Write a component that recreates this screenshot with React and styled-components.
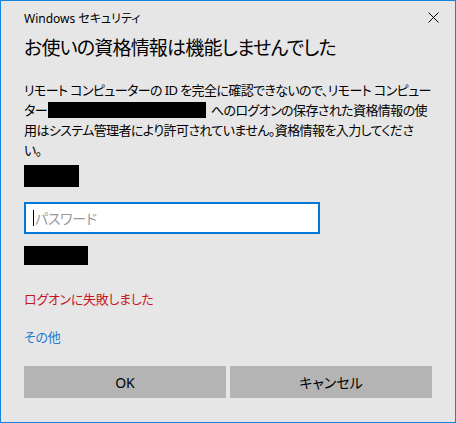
import React from 'react';
import styled, { createGlobalStyle } from 'styled-components';

const GlobalStyle = createGlobalStyle`
  html, body {
    margin: 0;
    padding: 0;
    background: #e6e6e6;
  }
  * {
    box-sizing: border-box;
  }
`;

const Window = styled.div`
  width: 456px;
  height: 423px;
  border: 1px solid #1883d7;
  background: #e6e6e6;
  font-family: "Noto Sans", "Noto Sans CJK JP", sans-serif;
  font-feature-settings: "palt";
  color: #000;
  display: flex;
  flex-direction: column;
  padding: 0 23px 0 23px;
  overflow: hidden;
`;

const TitleBar = styled.div`
  display: flex;
  justify-content: space-between;
  align-items: center;
  height: 31px;
  padding-top: 2px;
`;

const Caption = styled.div`
  font-size: 12px;
`;

const CloseButton = styled.button`
  border: none;
  background: transparent;
  padding: 0;
  margin-right: -8px;
  width: 14px;
  height: 14px;
  display: flex;
  align-items: center;
  justify-content: center;
`;

const Heading = styled.h1`
  margin: 2px 0 0;
  font-size: 19px;
  letter-spacing: -0.8px;
  font-weight: 400;
  line-height: 28px;
`;

const Message = styled.div`
  margin-top: 18px;
  font-size: 13px;
  letter-spacing: -0.6px;
  line-height: 20px;
`;

const Line = styled.div`
  white-space: pre;
  display: flex;
  align-items: center;
`;

const Redacted = styled.span`
  display: inline-block;
  background: #000;
  width: ${(p) => p.w}px;
  height: ${(p) => p.h}px;
  margin: ${(p) => p.m || '0'};
`;

const Block = styled.div`
  background: #000;
  width: ${(p) => p.w}px;
  height: ${(p) => p.h}px;
  margin-top: ${(p) => p.mt}px;
`;

const InputWrap = styled.div`
  margin-top: 15px;
  width: 296px;
  height: 32px;
  border: 2px solid #0078d7;
  background: #fff;
  display: flex;
  align-items: center;
  padding-left: 7px;
`;

const Caret = styled.span`
  width: 1px;
  height: 16px;
  background: #000;
  margin-right: 1px;
`;

const Placeholder = styled.span`
  font-size: 14px;
  letter-spacing: -0.3px;
  color: #9a9a9a;
`;

const ErrorText = styled.div`
  margin-top: 24px;
  font-size: 13px;
  letter-spacing: -0.3px;
  color: #c8171e;
`;

const MoreLink = styled.a`
  margin-top: 19px;
  font-size: 13px;
  letter-spacing: -0.3px;
  color: #1a7cd3;
  text-decoration: none;
  align-self: flex-start;
`;

const ButtonRow = styled.div`
  margin-top: 20px;
  display: grid;
  grid-template-columns: 1fr 1fr;
  gap: 4px;
`;

const Button = styled.button`
  height: 32px;
  border: none;
  background: #b4b4b4;
  font-family: inherit;
  font-feature-settings: "palt";
  font-size: 14px;
  color: #000;
`;

export default function App() {
  return (
    <>
      <GlobalStyle />
      <Window>
        <TitleBar>
          <Caption>Windows セキュリティ</Caption>
          <CloseButton aria-label="閉じる">
            <svg width="11" height="11" viewBox="0 0 11 11">
              <path d="M0.5 0.5 L10.5 10.5 M10.5 0.5 L0.5 10.5" stroke="#000" strokeWidth="1" />
            </svg>
          </CloseButton>
        </TitleBar>
        <Heading>お使いの資格情報は機能しませんでした</Heading>
        <Message>
          <Line>リモート コンピューターの ID を完全に確認できないので、リモート コンピュー</Line>
          <Line>
            ター<Redacted w={158} h={16} m="0 5px 0 1px" />へのログオンの保存された資格情報の使
          </Line>
          <Line>用はシステム管理者により許可されていません。資格情報を入力してくださ</Line>
          <Line>い。</Line>
        </Message>
        <Block w={55} h={22} mt={5} />
        <InputWrap>
          <Caret />
          <Placeholder>パスワード</Placeholder>
        </InputWrap>
        <Block w={64} h={19} mt={12} />
        <ErrorText>ログオンに失敗しました</ErrorText>
        <MoreLink href="#">その他</MoreLink>
        <ButtonRow>
          <Button>OK</Button>
          <Button>キャンセル</Button>
        </ButtonRow>
      </Window>
    </>
  );
}
